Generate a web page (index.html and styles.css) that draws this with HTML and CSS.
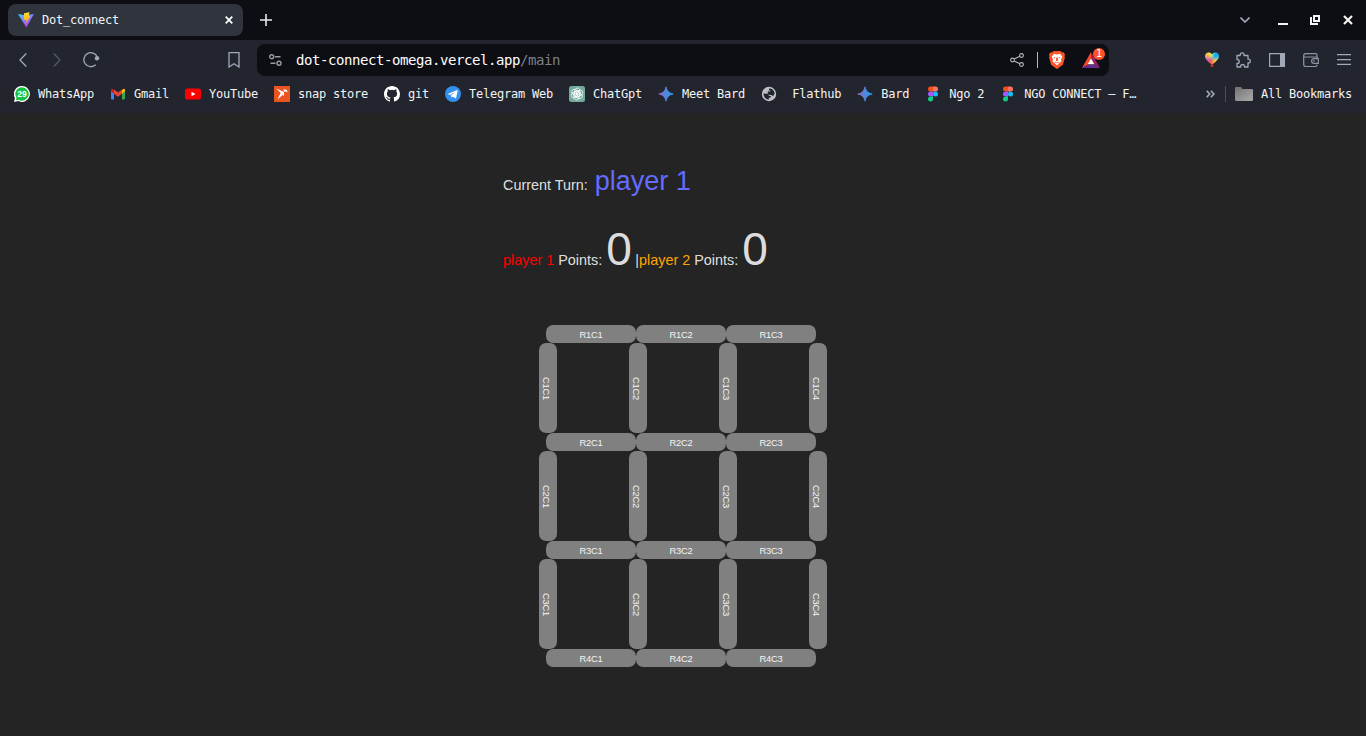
FILE: index.html
```html
<!DOCTYPE html>
<html lang="en">
<head>
<meta charset="utf-8">
<title>Dot_connect</title>
<link rel="stylesheet" href="styles.css">
</head>
<body>
<svg class="defs" width="0" height="0" aria-hidden="true">
  <defs>
    <linearGradient id="bardFill" x1="0" y1="0" x2="1" y2="0"><stop offset="0.1" stop-color="#8c6fc4"/><stop offset="0.5" stop-color="#4f86dd"/><stop offset="1" stop-color="#25a5ee"/></linearGradient>
    <linearGradient id="viteBlue" x1="0" y1="0" x2="0.6" y2="1"><stop offset="0" stop-color="#41d1ff"/><stop offset="1" stop-color="#bd34fe"/></linearGradient>
    <linearGradient id="viteGold" x1="0" y1="0" x2="0" y2="1"><stop offset="0" stop-color="#ffdd35"/><stop offset="1" stop-color="#ffa800"/></linearGradient>
    <linearGradient id="folderFill" x1="0" y1="0" x2="1" y2="1"><stop offset="0" stop-color="#777"/><stop offset="1" stop-color="#aaa"/></linearGradient>
    <clipPath id="heart"><path d="M7 13C3.500 9.800 0 7.500 0 4C0 .3 4.800-.7 7 2.300C9.200-.7 14 .3 14 4C14 7.500 10.500 9.800 7 13z"/></clipPath>
    <filter id="blend" x="-20%" y="-20%" width="140%" height="140%"><feGaussianBlur stdDeviation=".8"/></filter>
    <symbol id="bard" viewBox="0 0 16 16"><path fill="url(#bardFill)" d="M8 .8Q9.100 6.900 15.200 8Q9.100 9.100 8 15.200Q6.900 9.100.8 8Q6.900 6.900 8 .8Z" stroke="url(#bardFill)" stroke-width=".8"/></symbol>
    <symbol id="figma" viewBox="0 0 16 16"><path fill="#f24e1e" d="M8 .5H5.500a2.500 2.500 0 0 0 0 5H8z"/><path fill="#ff7262" d="M8 .5h2.500a2.500 2.500 0 0 1 0 5H8z"/><path fill="#a259ff" d="M8 5.500H5.500a2.500 2.500 0 0 0 0 5H8z"/><circle cx="10.500" cy="8" r="2.500" fill="#1abcfe"/><path fill="#0acf83" d="M8 10.500H5.500A2.500 2.500 0 1 0 8 13z"/></symbol>
  </defs>
</svg>
<header class="tabstrip">
  <div class="tab">
    <svg class="i16" viewBox="0 0 16 16"><path fill="url(#viteBlue)" d="M0 2L7.200 3.200L15.900 2L8.400 15.600Z"/><path fill="url(#viteGold)" d="M6 1.200L11.500.2L10.700 4.200L12.500 4L8 11.500L8.500 7.600L5.800 8Z"/></svg>
    <span class="tab-title">Dot_connect</span>
    <svg class="tab-close" viewBox="0 0 8 8"><path d="M.7.7l6.600 6.600M7.300.7L.7 7.300" stroke="#fff" stroke-width="1.700"/></svg>
  </div>
  <svg class="plus" viewBox="0 0 12 12"><path d="M6 0v12M0 6h12" stroke="#e8e9ed" stroke-width="1.600"/></svg>
  <div class="window-controls">
    <svg width="10" height="6" viewBox="0 0 10 6"><path d="M.5.500L5 5L9.500.500" fill="none" stroke="#a1a8b8" stroke-width="1.600"/></svg>
    <svg width="10" height="10" viewBox="0 0 10 10"><path fill="#f4f4f4" d="M0 8h10v2H0z"/></svg>
    <svg width="10" height="10" viewBox="0 0 10 10"><path fill="none" stroke="#f4f4f4" stroke-width="2" d="M4 1h5v5H4z"/><path fill="none" stroke="#f4f4f4" stroke-width="2" d="M1 2v7h7"/></svg>
    <svg width="10" height="10" viewBox="0 0 10 10"><path d="M1 1l8 8M9 1L1 9" stroke="#f4f4f4" stroke-width="2.200"/></svg>
  </div>
</header>
<nav class="toolbar">
  <div class="nav-buttons">
    <svg width="8" height="14" viewBox="0 0 8 14"><path d="M7.300.500L1 7l6.300 6.500" fill="none" stroke="#a1a8b8" stroke-width="1.300"/></svg>
    <svg width="8" height="14" viewBox="0 0 8 14"><path d="M.7.500L7 7L.7 13.500" fill="none" stroke="#555a66" stroke-width="1.300"/></svg>
    <svg width="17" height="16" viewBox="0 0 17 16"><path d="M12.700 12.800A7 7 0 1 1 14.300 5" fill="none" stroke="#a1a8b8" stroke-width="1.300"/><circle cx="14" cy="6.200" r="2.200" fill="#a1a8b8"/></svg>
  </div>
  <svg class="save" width="12" height="16" viewBox="0 0 12 16"><path d="M1 .7h10v14.300L6 11.800L1 15z" fill="none" stroke="#a1a8b8" stroke-width="1.300"/></svg>
  <div class="address">
    <svg width="13" height="12" viewBox="0 0 13 12" fill="none" stroke="#9a9ca2" stroke-width="1.400"><circle cx="2.700" cy="2.700" r="2"/><path d="M6 2.700h5.500M1.500 9.300h5"/><circle cx="10" cy="9.300" r="2"/></svg>
    <span class="url">dot-connect-omega.vercel.app<span class="path">/main</span></span>
    <svg class="share" width="14" height="14" viewBox="0 0 14 14" fill="none" stroke="#b3b6bd" stroke-width="1.100"><circle cx="2.500" cy="7" r="1.900"/><circle cx="11.500" cy="2.500" r="1.900"/><circle cx="11.500" cy="11.500" r="1.900"/><path d="M4.200 6.100l5.600-2.800M4.200 7.900l5.600 2.800"/></svg>
    <span class="sep"></span>
    <svg class="brave" width="16" height="18" viewBox="0 0 16 18"><path fill="#fb542b" d="M4.500 0h7l1.500 1.500l1.500-.2L16 3.500l-.5 1.700l.4 1.300l-2 7.300L8 18L2.100 13.800L.1 6.500l.4-1.300L0 3.500l1.500-2.200l1.500.2z"/><path fill="#fff" d="M5 2.800l3 .6l3-.6L13.300 5.800l-1.500 3l.7 1.500l-2.200 1.900L8 14.200l-2.300-2L3.500 10.300L4.200 8.800L2.700 5.800z"/><path fill="#fb542b" d="M4.400 6l2.300.4l-1.100 1.100zM11.600 6l-2.300.4l1.100 1.100zM7.300 6.500h1.400l.5 3L8 10.200l-1.200-.7zM5.500 10.500L8 11.500l2.500-1l-.3.900L8 12.300l-2.200-.9z"/></svg>
    <div class="rewards">
      <svg width="18" height="16" viewBox="0 0 18 16"><path fill="#ff4724" d="M9 0L0 16l6-3.500L9 6z"/><path fill="#9e1f63" d="M9 0l9 16l-6-3.500L9 6z"/><path fill="#662d91" d="M0 16h18l-6-3.500H6z"/><path fill="#fff" d="M9 6.200l3.300 6H5.700z"/></svg>
      <span class="badge">1</span>
    </div>
  </div>
  <div class="extensions">
    <svg width="14" height="16" viewBox="0 0 14 16"><g clip-path="url(#heart)"><g filter="url(#blend)"><path fill="#f4e83a" d="M-3-3H7v10z"/><path fill="#ffb04a" d="M-3-3v7l10 3z"/><path fill="#d07be0" d="M-3 4v5l10-2z"/><path fill="#f0509a" d="M-3 8l8 8l2-9z"/><path fill="#2fe0b4" d="M7-3h5L7 7z"/><path fill="#1da7f7" d="M11-3h6v9L7 7z"/><path fill="#83dd65" d="M17 5v6L7 7z"/><path fill="#ffc53e" d="M17 9l-8 7L7 7z"/><path fill="#ff5a36" d="M4 16h6L7 7z"/></g></g><path fill="#d23522" d="M6 13h2l.8 1.700H5.200z"/></svg>
    <svg width="16" height="16" viewBox="0 0 16 16"><path fill="none" stroke="#a1a8b8" stroke-width="1.300" stroke-linejoin="round" d="M2 3.500H5.200V2.800a1.900 1.900 0 0 1 3.800 0v.7h4v3.700h.4a1.900 1.900 0 0 1 0 3.800H13v4H9.500v-.6a1.900 1.900 0 0 0-3.800 0v.6H2v-3.700h.4a1.900 1.900 0 0 0 0-3.800H2z"/></svg>
    <svg width="16" height="14" viewBox="0 0 16 14"><path fill="none" stroke="#a1a8b8" stroke-width="1.200" d="M.6.600h14.800v12.800H.6z"/><path fill="#a1a8b8" d="M11 0h5v14h-5z"/></svg>
    <svg width="16" height="14" viewBox="0 0 16 14" fill="none" stroke="#8e94a2" stroke-width="1.200"><path d="M14 4V2.300Q14 .7 12.500.7H2.500A1.800 1.800 0 0 0 .7 2.500v9a2 2 0 0 0 2 2h9.600q1.700 0 1.700-1.700M.8 4H13q1.700 0 1.700 1.500"/><path d="M15.300 5.600H11a2.400 2.400 0 0 0 0 4.800h4.300zM10 8h2"/></svg>
    <svg class="menu" width="14" height="11" viewBox="0 0 14 11"><path fill="#a1a8b8" d="M0 0h14v1.200H0zM0 5h14v1.200H0zM0 9.800h14V11H0z"/></svg>
  </div>
</nav>
<div class="bookmarks">
  <a><svg class="i16" viewBox="0 0 16 16"><path fill="#fff" d="M8 0a8 8 0 1 1-3.800 15.100L0 16l1-3.900A8 8 0 0 1 8 0z"/><path fill="#11c244" d="M8 1.300a6.700 6.700 0 1 1-3.500 12.400L1.800 14.300l.7-2.600A6.700 6.700 0 0 1 8 1.300z"/><text x="8" y="11" text-anchor="middle" class="whatsapp-count">29</text></svg>WhatsApp</a>
  <a><svg class="i16" viewBox="0 0 16 16"><path fill="#4285f4" d="M1 5l3 2v6.500H2q-1 0-1-1z"/><path fill="#34a853" d="M12 7l3-2v7.500q0 1-1 1h-2z"/><path fill="#fbbc04" d="M12 4q3-2.500 3 0v1.500l-3 2.200z"/><path fill="#c5221f" d="M4 4Q1 1.500 1 4v1.500l3 2.200z"/><path fill="#ea4335" d="M4 3.500l4 3l4-3v4.200l-4 3l-4-3z"/></svg>Gmail</a>
  <a><svg class="i16" viewBox="0 0 16 16"><rect y="2.500" width="16" height="11" rx="2.600" fill="#f00"/><path fill="#fff" d="M6.500 5.700L10.600 8l-4.100 2.300z"/></svg>YouTube</a>
  <a><svg class="i16" viewBox="0 0 16 16"><path fill="#e95420" d="M0 0h16v16H0z"/><path fill="#fff" d="M2.300 2.500l7.700 3.500v4.200zM9.200 3.600h3L14 5.700h-3.800zM3.500 13.500L6.600 7l1.900 1.900z"/></svg>snap store</a>
  <a><svg class="i16" viewBox="0 0 16 16"><path fill="#fff" d="M8 0C3.580 0 0 3.580 0 8c0 3.540 2.290 6.530 5.470 7.590.4.070.55-.17.55-.38 0-.19-.01-.82-.01-1.490-2.010.37-2.530-.49-2.690-.94-.09-.23-.48-.94-.82-1.130-.28-.15-.68-.52-.01-.53.63-.01 1.080.58 1.230.82.72 1.210 1.870.87 2.330.66.070-.52.28-.87.51-1.070-1.780-.2-3.640-.89-3.640-3.950 0-.87.31-1.590.82-2.150-.08-.2-.36-1.020.08-2.120 0 0 .67-.21 2.200.82a7.600 7.600 0 0 1 4 0c1.530-1.040 2.200-.82 2.200-.82.44 1.100.16 1.920.08 2.120.51.56.82 1.270.82 2.150 0 3.070-1.870 3.750-3.650 3.950.29.25.54.73.54 1.480 0 1.070-.01 1.930-.01 2.200 0 .21.15.46.55.38A8 8 0 0 0 16 8c0-4.420-3.580-8-8-8z"/></svg>git</a>
  <a><svg class="i16" viewBox="0 0 16 16"><circle cx="8" cy="8" r="8" fill="#3390ec"/><path fill="#fff" d="M2.700 7.900L12.200 3.900Q12.900 3.800 12.700 4.600L11.100 12q-.3.800-1 .3L7.700 10.600l-1.200 1.200l-.5-2.300l4.300-3.800l-5.200 3.200z"/></svg>Telegram Web</a>
  <a><svg class="i16" viewBox="0 0 16 16"><rect width="16" height="16" rx="2.500" fill="#74aa9c"/><g fill="none" stroke="#fff" stroke-width=".8"><path id="petal" d="M8 4.600L5 6.300v4.900c0 3.500 5 3.600 5.100.4V8.500L7.500 7"/><use href="#petal" transform="rotate(60 8 8)"/><use href="#petal" transform="rotate(120 8 8)"/><use href="#petal" transform="rotate(180 8 8)"/><use href="#petal" transform="rotate(240 8 8)"/><use href="#petal" transform="rotate(300 8 8)"/></g></svg>ChatGpt</a>
  <a><svg class="i16"><use href="#bard"/></svg>Meet Bard</a>
  <a><svg class="i16" viewBox="0 0 16 16"><circle cx="8" cy="8" r="7.200" fill="#bdc1c6"/><path fill="#22252d" d="M2.400 7.500l3.800.2q1.800.6 1.800 2.300h1.800q.5 1.800-2 1.800v1.900Q3 13.200 2.400 7.500zM8.500 2.300l2.300.6q2.700 1.500 2.900 4.500L12 10.200L10.600 8.900H8.300L6.700 7.400V5.600h2.600V4.400H7.700z"/></svg><span class="indent">Flathub</span></a>
  <a><svg class="i16"><use href="#bard"/></svg>Bard</a>
  <a><svg class="i16"><use href="#figma"/></svg>Ngo 2</a>
  <a><svg class="i16"><use href="#figma"/></svg>NGO CONNECT — F…</a>
  <div class="bookmarks-end">
    <svg width="9" height="8" viewBox="0 0 9 8"><path d="M.7.700L3.700 4L.7 7.300M4.900.700L7.900 4L4.900 7.300" fill="none" stroke="#a1a8b8" stroke-width="1.700"/></svg>
    <span class="sep dim"></span>
    <svg width="18" height="14" viewBox="0 0 18 14"><path fill="#777" d="M1 0h5l1.500 2H17v3H0V1q0-1 1-1z"/><path fill="url(#folderFill)" d="M0 3h7l1-1h9q1 0 1 1v9.500q0 1.500-1.500 1.500h-15Q0 14 0 12.500z"/></svg>
    <span>All Bookmarks</span>
  </div>
</div>
<main class="page">
  <p class="turn">Current Turn: <span class="turn-name">player 1</span></p>
  <p class="scores"><span class="red">player 1</span> Points: <span class="num">0</span> |<span class="orange">player 2</span> Points: <span class="num">0</span></p>
  <div class="board">
    <div class="row"><button>R1C1</button><button>R1C2</button><button>R1C3</button></div>
    <div class="cols"><button>C1C1</button><button>C1C2</button><button>C1C3</button><button>C1C4</button></div>
    <div class="row"><button>R2C1</button><button>R2C2</button><button>R2C3</button></div>
    <div class="cols"><button>C2C1</button><button>C2C2</button><button>C2C3</button><button>C2C4</button></div>
    <div class="row"><button>R3C1</button><button>R3C2</button><button>R3C3</button></div>
    <div class="cols"><button>C3C1</button><button>C3C2</button><button>C3C3</button><button>C3C4</button></div>
    <div class="row"><button>R4C1</button><button>R4C2</button><button>R4C3</button></div>
  </div>
</main>
</body>
</html>
```
FILE: styles.css
```css
* { box-sizing: border-box; }
body { margin: 0; width: 1366px; height: 736px; overflow: hidden; display: flex; flex-direction: column; background: #242424; font-family: "DejaVu Sans Mono", monospace; font-size: 12px; letter-spacing: -0.224px; color: #f3f4f6; }
svg { display: block; flex: none; }
.defs { position: absolute; }
.i16 { width: 16px; height: 16px; }
.tabstrip { height: 40px; flex: none; background: #0d0e13; display: flex; align-items: center; padding: 0 13px 0 8px; }
.tab { width: 235px; height: 32px; background: #30343d; border-radius: 8px; display: flex; align-items: center; padding: 0 10px; }
.tab-title { margin-left: 8px; flex: 1; }
.tab-close { width: 8px; height: 8px; }
.plus { width: 12px; height: 12px; margin-left: 17px; }
.window-controls { margin-left: auto; display: flex; align-items: center; gap: 23px; }
.window-controls svg:first-child { margin-right: 5px; }
.window-controls svg:nth-child(2) { margin-right: -1px; }
.toolbar { height: 40px; flex: none; background: #22252d; display: flex; align-items: center; padding-left: 19px; }
.nav-buttons { display: flex; align-items: center; gap: 26px; }
.nav-buttons svg:last-child { margin-left: -4px; }
.save { margin-left: 128px; }
.address { width: 852px; height: 32px; margin-left: 17px; background: #0d0e13; border-radius: 8px; display: flex; align-items: center; padding: 0 9px 0 12px; }
.url { margin-left: 14px; flex: 1; font-size: 14px; letter-spacing: -0.43px; color: #fff; }
.path { color: #7d8087; }
.sep { width: 1px; height: 16px; margin: 0 11px 0 13px; background: #b3b6bd; }
.sep.dim { background: #4b4f59; margin: 0 9px 0 10px; }
.rewards { position: relative; margin-left: 17px; }
.badge { position: absolute; left: 11px; top: -4px; width: 12px; height: 12px; border-radius: 50%; background: #fb542b; color: #fff; font-size: 10px; line-height: 12px; text-align: center; }
.extensions { margin-left: auto; padding-right: 15px; display: flex; align-items: center; gap: 18px; }
.extensions svg:first-child { margin-right: -2px; }
.menu { margin-bottom: 1px; }
.bookmarks { height: 33px; flex: none; background: #22252d; display: flex; align-items: flex-start; padding: 6px 14px 0; gap: 16px; white-space: nowrap; }
.bookmarks a { display: flex; align-items: center; gap: 8px; height: 16px; }
.indent { padding-left: 7px; }
.whatsapp-count { font: bold 8.500px "Liberation Sans", sans-serif; fill: #fff; letter-spacing: 0; }
.bookmarks-end { margin-left: auto; height: 16px; display: flex; align-items: center; }
.bookmarks-end span:last-child { margin-left: 8px; }
.page { flex: 1; font-family: "Liberation Sans", Arial, sans-serif; font-size: 14.4px; letter-spacing: 0; color: rgba(255,255,255,.87); padding-top: 52px; }
.turn, .scores { margin: 0 0 0 503px; white-space: nowrap; }
.turn { height: 32px; line-height: 32px; }
.turn-name { font-size: 27px; color: #646cff; margin-left: 3px; }
.scores { height: 54px; margin-top: 25px; line-height: 54px; }
.num { font-size: 46px; letter-spacing: -0.550px; }
.red { color: red; }
.orange { color: orange; }
.board { margin: 49px 0 0 539px; }
.row { display: flex; padding-left: 7px; }
.cols { display: flex; gap: 72px; }
.board button { width: 90px; height: 18px; padding: 1px 0 0; border: 0; border-radius: 7.2px; background: gray; color: #f4f4f4; font: 9.400px "Liberation Sans", Arial, sans-serif; letter-spacing: -0.250px; display: flex; align-items: center; justify-content: center; }
.board .cols button { width: 18px; height: 90px; writing-mode: vertical-rl; padding: 0 3px 0 0; }
```
